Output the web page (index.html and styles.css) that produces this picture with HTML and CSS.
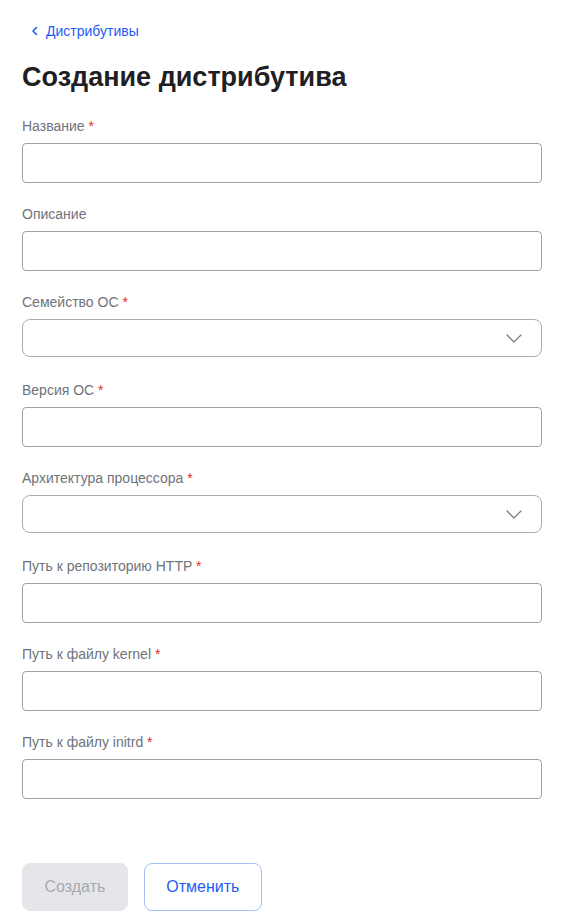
FILE: index.html
```html
<!DOCTYPE html>
<html lang="ru">
<head>
<meta charset="utf-8">
<title>Создание дистрибутива</title>
<link rel="stylesheet" href="styles.css">
</head>
<body>
<div class="page">
  <a class="back" href="#">
    <svg class="back-icon" width="8" height="10" viewBox="0 0 8 10"><path d="M5.5 1.5 L2 5 L5.5 8.5" fill="none" stroke="currentColor" stroke-width="1.6" stroke-linecap="round" stroke-linejoin="round"/></svg>
    <span>Дистрибутивы</span>
  </a>
  <h1 class="title">Создание дистрибутива</h1>
  <form class="form">
    <div class="field">
      <label class="label">Название <span class="req">*</span></label>
      <input class="input" type="text">
    </div>
    <div class="field">
      <label class="label">Описание</label>
      <input class="input" type="text">
    </div>
    <div class="field">
      <label class="label">Семейство ОС <span class="req">*</span></label>
      <div class="select">
        <svg class="chev" width="16" height="9" viewBox="0 0 16 9"><path d="M1 1 L8 8 L15 1" fill="none" stroke="#7a7e86" stroke-width="1.3" stroke-linecap="round" stroke-linejoin="round"/></svg>
      </div>
    </div>
    <div class="field">
      <label class="label">Версия ОС <span class="req">*</span></label>
      <input class="input" type="text">
    </div>
    <div class="field">
      <label class="label">Архитектура процессора <span class="req">*</span></label>
      <div class="select">
        <svg class="chev" width="16" height="9" viewBox="0 0 16 9"><path d="M1 1 L8 8 L15 1" fill="none" stroke="#7a7e86" stroke-width="1.3" stroke-linecap="round" stroke-linejoin="round"/></svg>
      </div>
    </div>
    <div class="field">
      <label class="label">Путь к репозиторию HTTP <span class="req">*</span></label>
      <input class="input" type="text">
    </div>
    <div class="field">
      <label class="label">Путь к файлу kernel <span class="req">*</span></label>
      <input class="input" type="text">
    </div>
    <div class="field">
      <label class="label">Путь к файлу initrd <span class="req">*</span></label>
      <input class="input" type="text">
    </div>
    <div class="actions">
      <button type="button" class="btn btn-primary" disabled>Создать</button>
      <button type="button" class="btn btn-outline">Отменить</button>
    </div>
  </form>
</div>
</body>
</html>
```
FILE: styles.css
```css
* { box-sizing: border-box; }
html, body { margin: 0; padding: 0; background: #fff; }
body {
  font-family: "Liberation Sans", Arial, sans-serif;
  color: #1f2023;
}
.page {
  padding: 22px 29px 0 22px;
}
.back {
  display: inline-flex;
  align-items: center;
  gap: 7px;
  margin-left: 9px;
  color: #1d5cf5;
  text-decoration: none;
  font-size: 14px;
  line-height: 18px;
}
.back-icon { display: block; }
.title {
  margin: 21px 0 0;
  font-size: 27px;
  line-height: 32px;
  font-weight: 700;
  color: #1f2023;
}
.form {
  margin-top: 23px;
  display: flex;
  flex-direction: column;
}
.field {
  display: flex;
  flex-direction: column;
  height: 88px;
}
.label {
  font-size: 14px;
  line-height: 20px;
  color: #6f737b;
  margin-bottom: 7px;
}
.req { color: #e0302b; }
.input {
  display: block;
  width: 100%;
  height: 40px;
  border: 1px solid #9fa2a8;
  border-radius: 4px;
  background: #fff;
  margin: 0;
  padding: 0 12px;
  font: inherit;
}
.select {
  height: 38px;
  border: 1px solid #a9acb2;
  border-radius: 8px;
  display: flex;
  align-items: center;
  justify-content: flex-end;
  padding-right: 19px;
}
.chev { display: block; }
.actions {
  margin-top: 43px;
  display: flex;
  gap: 16px;
}
.btn {
  height: 48px;
  padding: 0 21.5px;
  border-radius: 8px;
  font-family: inherit;
  font-size: 16px;
  cursor: pointer;
}
.btn-primary {
  background: #e5e6e9;
  color: #a7a9ae;
  border: 1px solid #e5e6e9;
}
.btn-outline {
  background: #fff;
  color: #1d5cf5;
  border: 1px solid #a3c0fb;
}
```
